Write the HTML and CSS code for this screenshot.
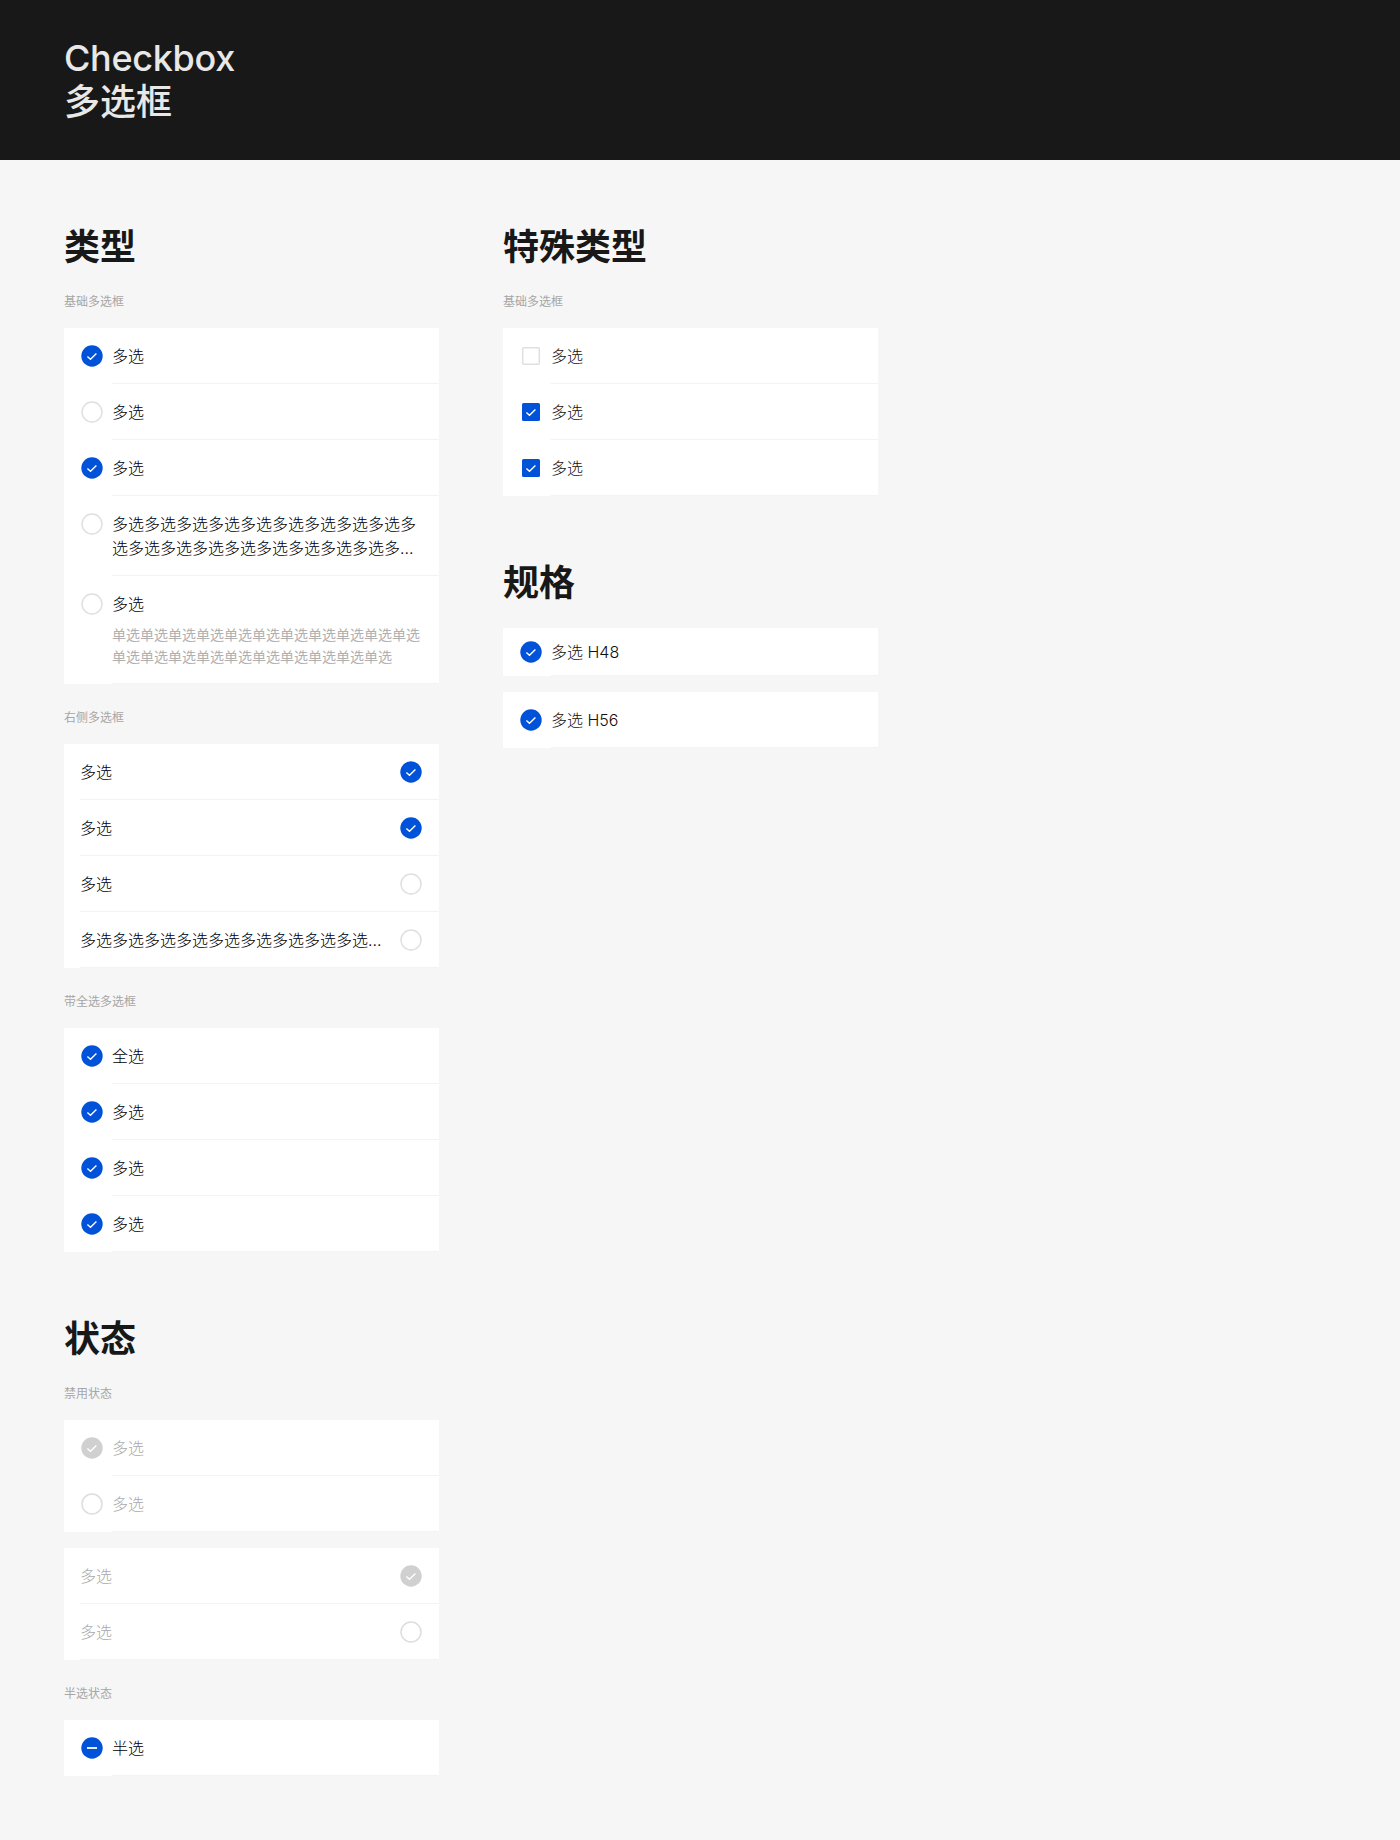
FILE: index.html
```html
<!DOCTYPE html>
<html lang="zh-CN">
<head>
  <meta charset="utf-8">
  <title>Checkbox 多选框</title>
  <link rel="stylesheet" href="styles.css">
</head>
<body>
  <!-- icon sprite -->
  <svg class="sprite" width="0" height="0">
    <symbol id="circle-on" viewBox="0 0 24 24">
      <circle cx="12" cy="12" r="10.7" fill="currentColor"/>
      <path d="M7.4 12.4l3.1 2.9 5.9-5.9" fill="none" stroke="#fff" stroke-width="1.4"/>
    </symbol>
    <symbol id="circle-off" viewBox="0 0 24 24">
      <circle cx="12" cy="12" r="10" fill="#fff" stroke="currentColor" stroke-width="1.5"/>
    </symbol>
    <symbol id="circle-half" viewBox="0 0 24 24">
      <circle cx="12" cy="12" r="10.7" fill="currentColor"/>
      <path d="M7 12h10" fill="none" stroke="#fff" stroke-width="1.8"/>
    </symbol>
    <symbol id="square-on" viewBox="0 0 24 24">
      <rect x="3" y="3" width="18" height="18" rx="1.5" fill="currentColor"/>
      <path d="M7.4 12.4l3.1 2.9 5.9-5.9" fill="none" stroke="#fff" stroke-width="1.4"/>
    </symbol>
    <symbol id="square-off" viewBox="0 0 24 24">
      <rect x="3.7" y="3.7" width="16.6" height="16.6" rx="1" fill="#fff" stroke="currentColor" stroke-width="1.5"/>
    </symbol>
  </svg>

  <header class="page-header">
    <h1>Checkbox<br><span class="title-cn">多选框</span></h1>
  </header>

  <main class="page-main">
    <div class="column">
      <section class="section">
        <h2>类型</h2>
        <p class="caption">基础多选框</p>
        <div class="card">
          <div class="row"><svg class="icon on"><use href="#circle-on"/></svg><span class="label">多选</span></div>
          <div class="row"><svg class="icon off"><use href="#circle-off"/></svg><span class="label">多选</span></div>
          <div class="row"><svg class="icon on"><use href="#circle-on"/></svg><span class="label">多选</span></div>
          <div class="row"><svg class="icon off"><use href="#circle-off"/></svg><span class="label">多选多选多选多选多选多选多选多选多选多选多选多选多选多选多选多选多选多选多...</span></div>
          <div class="row">
            <svg class="icon off"><use href="#circle-off"/></svg>
            <div class="label">
              多选
              <p class="desc">单选单选单选单选单选单选单选单选单选单选单选单选单选单选单选单选单选单选单选单选单选</p>
            </div>
          </div>
        </div>

        <p class="caption">右侧多选框</p>
        <div class="card">
          <div class="row right"><span class="label">多选</span><svg class="icon on"><use href="#circle-on"/></svg></div>
          <div class="row right"><span class="label">多选</span><svg class="icon on"><use href="#circle-on"/></svg></div>
          <div class="row right"><span class="label">多选</span><svg class="icon off"><use href="#circle-off"/></svg></div>
          <div class="row right"><span class="label">多选多选多选多选多选多选多选多选多选...</span><svg class="icon off"><use href="#circle-off"/></svg></div>
        </div>

        <p class="caption">带全选多选框</p>
        <div class="card">
          <div class="row"><svg class="icon on"><use href="#circle-on"/></svg><span class="label">全选</span></div>
          <div class="row"><svg class="icon on"><use href="#circle-on"/></svg><span class="label">多选</span></div>
          <div class="row"><svg class="icon on"><use href="#circle-on"/></svg><span class="label">多选</span></div>
          <div class="row"><svg class="icon on"><use href="#circle-on"/></svg><span class="label">多选</span></div>
        </div>
      </section>

      <section class="section">
        <h2>状态</h2>
        <p class="caption">禁用状态</p>
        <div class="card disabled">
          <div class="row"><svg class="icon on"><use href="#circle-on"/></svg><span class="label">多选</span></div>
          <div class="row"><svg class="icon off"><use href="#circle-off"/></svg><span class="label">多选</span></div>
        </div>
        <div class="card disabled next">
          <div class="row right"><span class="label">多选</span><svg class="icon on"><use href="#circle-on"/></svg></div>
          <div class="row right"><span class="label">多选</span><svg class="icon off"><use href="#circle-off"/></svg></div>
        </div>

        <p class="caption">半选状态</p>
        <div class="card">
          <div class="row"><svg class="icon on"><use href="#circle-half"/></svg><span class="label">半选</span></div>
        </div>
      </section>
    </div>

    <div class="column soft">
      <section class="section">
        <h2>特殊类型</h2>
        <p class="caption">基础多选框</p>
        <div class="card">
          <div class="row"><svg class="icon off"><use href="#square-off"/></svg><span class="label">多选</span></div>
          <div class="row"><svg class="icon on"><use href="#square-on"/></svg><span class="label">多选</span></div>
          <div class="row"><svg class="icon on"><use href="#square-on"/></svg><span class="label">多选</span></div>
        </div>
      </section>

      <section class="section">
        <h2 class="no-caption">规格</h2>
        <div class="card">
          <div class="row h48"><svg class="icon on"><use href="#circle-on"/></svg><span class="label">多选 H48</span></div>
        </div>
        <div class="card next">
          <div class="row"><svg class="icon on"><use href="#circle-on"/></svg><span class="label">多选 H56</span></div>
        </div>
      </section>
    </div>
  </main>
</body>
</html>
```

FILE: styles.css
```css
* {
  box-sizing: border-box;
}

body {
  margin: 0;
  background-color: #f6f6f6;
  color: #181818;
  font-family: Inter, "Noto Sans CJK SC", sans-serif;
}

.sprite {
  display: block;
  position: absolute;
}

.page-header {
  height: 160px;
  padding: 36px 64px 0;
  background-color: #181818;
}

.page-header h1 {
  margin: 0;
  font-size: 36px;
  line-height: 44px;
  font-weight: 500;
  letter-spacing: -0.3px;
  color: #e8e8e8;
}

.title-cn {
  letter-spacing: 0;
}

.page-main {
  display: flex;
  gap: 64px;
  padding: 64px;
}

.column {
  width: 375px;
}

.section + .section {
  margin-top: 64px;
}

/* taller line box drops the glyphs 1px, negative margin keeps the flow */
.section h2 {
  margin: 0 0 -2px;
  font-size: 36px;
  line-height: 46px;
  font-weight: 700;
}

.section h2.no-caption {
  margin-bottom: 22px;
}

.caption {
  margin: 24px 0 16px;
  font-size: 12px;
  line-height: 20px;
  color: #a6a6a6;
}

.card {
  background-color: #fff;
}

.card.next {
  margin-top: 16px;
}

.row {
  display: flex;
  align-items: flex-start;
  gap: 8px;
  padding: 16px;
  position: relative;
}

.row::after {
  content: "";
  position: absolute;
  left: 48px;
  right: 0;
  bottom: 0;
  height: 1px;
  background-color: #f3f3f3;
}

.row.right {
  justify-content: space-between;
  gap: 16px;
}

.row.right::after {
  left: 16px;
}

.row.h48 {
  padding: 12px 16px;
}

.icon {
  flex: none;
  width: 24px;
  height: 24px;
}

.icon.on {
  color: #0052d9;
}

.icon.off {
  color: #e0e0e0;
}

.label {
  min-width: 0;
  font-size: 16px;
  line-height: 24px;
  font-weight: 300;
  color: #000;
}

.soft .label {
  color: #111;
}

.desc {
  margin: 8px 0 0;
  font-size: 14px;
  line-height: 22px;
  font-weight: 400;
  color: #b0b0b0;
}

.disabled .label {
  color: #aaa;
}

.disabled .icon.on {
  color: #d0d0d0;
}

.disabled .icon.off {
  color: #ddd;
}
```
